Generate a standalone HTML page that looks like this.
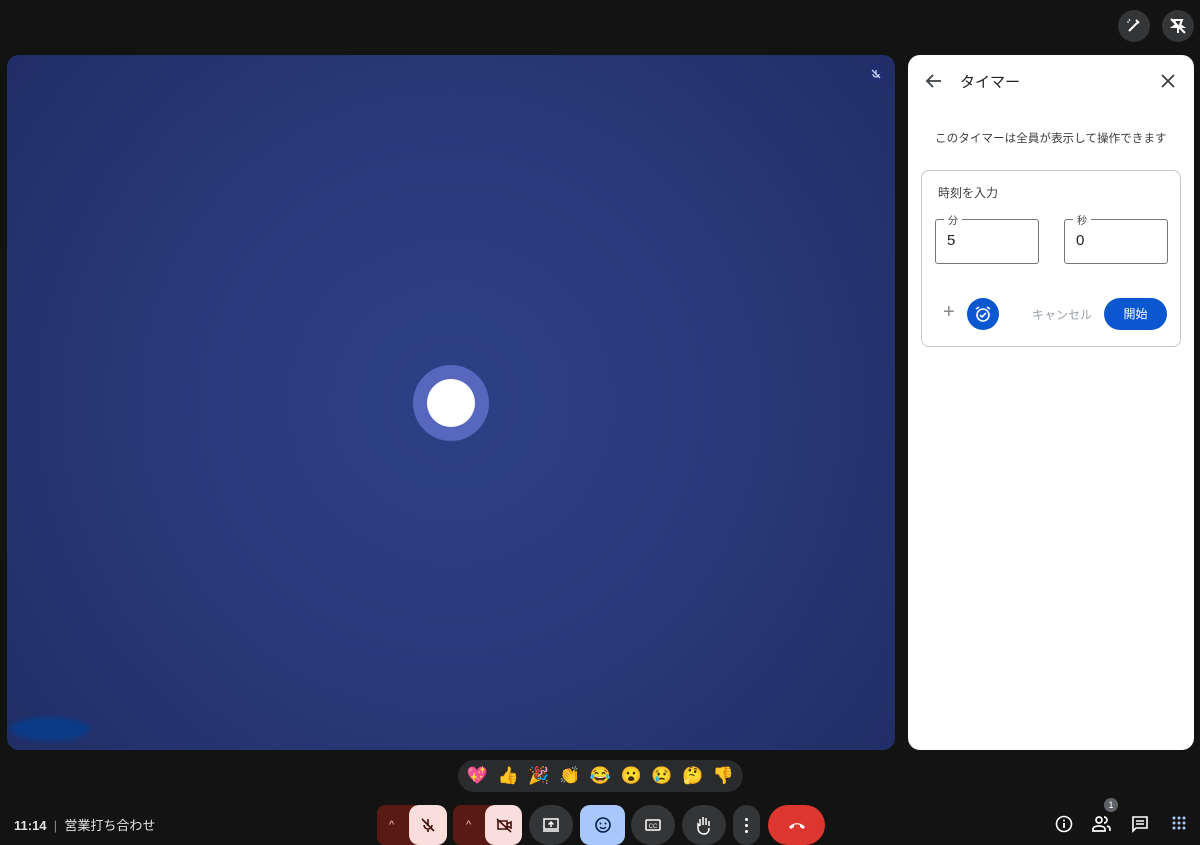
<!DOCTYPE html><html><head><meta charset="utf-8"><style>
body{margin:0;width:1200px;height:845px;background:#131314;font-family:"Liberation Sans","Noto Sans CJK JP",sans-serif;position:relative;overflow:hidden}
.a{position:absolute}
.tile{left:7px;top:55px;width:888px;height:695px;border-radius:12px;background:radial-gradient(circle at 50% 50%,#2e4085 0%,#283a7a 50%,#212e66 100%)}
.panel{left:908px;top:55px;width:286px;height:695px;background:#fff;border-radius:12px}
.btn{top:805px;height:40px;border-radius:20px;background:#333537;display:flex;align-items:center;justify-content:center}
svg{display:block}
</style></head><body>
<div class="a" style="left:1118px;top:10px;width:32px;height:32px;border-radius:50%;background:#333537"></div>
<div class="a" style="left:1162px;top:10px;width:32px;height:32px;border-radius:50%;background:#333537"></div>
<svg class="a" style="left:1124px;top:16px" width="20" height="20" viewBox="0 0 20 20"><path d="M5 15L14 6M12 4l3 3" stroke="#fff" stroke-width="2" fill="none"/><path d="M5 3l1 2M3 6h2" stroke="#fff"/></svg>
<svg class="a" style="left:1168px;top:16px" width="20" height="20" viewBox="0 0 20 20"><path d="M6 4h8l-2 5 3 2H5l3-2zM10 11v6M3 3l14 14" stroke="#fff" stroke-width="2" fill="none"/></svg>
<div class="a tile"></div>
<div class="a" style="left:866px;top:64px;width:20px;height:20px;border-radius:50%;background:#1f2f6e"></div>
<svg class="a" style="left:870px;top:68px" width="12" height="12" viewBox="0 0 12 12"><path d="M6 2v5M3 6a3 3 0 0 0 6 0M2 2l8 8" stroke="#c8d0ff" stroke-width="1.3" fill="none"/></svg>
<div class="a" style="left:413px;top:365px;width:76px;height:76px;border-radius:50%;background:#5667bd"></div>
<div class="a" style="left:427px;top:379px;width:48px;height:48px;border-radius:50%;background:#fff"></div>
<div class="a" style="left:10px;top:717px;width:80px;height:24px;border-radius:50%;background:#0b3a86;filter:blur(2px)"></div>
<div class="a panel"></div>
<svg class="a" style="left:925px;top:72px" width="18" height="18" viewBox="0 0 18 18"><path d="M16 9H3M8 3L2 9l6 6" stroke="#3c4043" stroke-width="1.8" fill="none"/></svg>
<div class="a" style="left:960px;top:71px;font-size:15px;color:#202124">タイマー</div>
<svg class="a" style="left:1160px;top:73px" width="16" height="16" viewBox="0 0 16 16"><path d="M2 2l12 12M14 2L2 14" stroke="#3c4043" stroke-width="1.8"/></svg>
<div class="a" style="left:935px;top:130px;font-size:11.6px;color:#3c4043">このタイマーは全員が表示して操作できます</div>
<div class="a" style="left:921px;top:170px;width:258px;height:175px;border:1px solid #c7c7c7;border-radius:8px"></div>
<div class="a" style="left:938px;top:184px;font-size:12px;color:#3c4043">時刻を入力</div>
<div class="a" style="left:935px;top:219px;width:102px;height:43px;border:1px solid #747775;border-radius:3px"></div>
<div class="a" style="left:944px;top:212px;background:#fff;padding:0 4px;font-size:10px;color:#444">分</div>
<div class="a" style="left:947px;top:232px;font-size:15px;color:#202124">5</div>
<div class="a" style="left:1064px;top:219px;width:102px;height:43px;border:1px solid #747775;border-radius:3px"></div>
<div class="a" style="left:1073px;top:212px;background:#fff;padding:0 4px;font-size:10px;color:#444">秒</div>
<div class="a" style="left:1076px;top:232px;font-size:15px;color:#202124">0</div>
<div class="a" style="left:943px;top:302px;font-size:20px;color:#888;line-height:20px">+</div>
<div class="a" style="left:967px;top:298px;width:32px;height:32px;border-radius:50%;background:#0b57d0"></div>
<svg class="a" style="left:973px;top:304px" width="20" height="20" viewBox="0 0 20 20"><circle cx="10" cy="11" r="6" stroke="#fff" stroke-width="1.6" fill="none"/><path d="M7 11l2 2 4-4M3 5l3-2M17 5l-3-2" stroke="#fff" stroke-width="1.6" fill="none"/></svg>
<div class="a" style="left:1032px;top:306px;font-size:12px;color:#9aa0a6">キャンセル</div>
<div class="a" style="left:1104px;top:298px;width:63px;height:32px;border-radius:16px;background:#0b57d0;color:#fff;font-size:12px;text-align:center;line-height:32px">開始</div>
<div class="a" style="left:458px;top:760px;width:285px;height:32px;border-radius:16px;background:#2a2b2d;display:flex;justify-content:space-around;align-items:center;font-size:17px;padding:0 4px;box-sizing:border-box">
<span>💖</span><span>👍</span><span>🎉</span><span>👏</span><span>😂</span><span>😮</span><span>😢</span><span>🤔</span><span>👎</span></div>
<div class="a" style="left:14px;top:815px;font-size:13px;color:#e3e3e3"><b>11:14</b>&nbsp;&nbsp;<span style="color:#888">|</span>&nbsp;&nbsp;営業打ち合わせ</div>
<div class="a btn" style="left:377px;width:70px;background:#5a1a14;border-radius:8px 20px 20px 8px;justify-content:flex-start"><span style="color:#f1c0bb;font-size:11px;margin-left:12px">^</span></div>
<div class="a btn" style="left:409px;width:38px;background:#f9dedc;border-radius:10px"><svg width="18" height="18" viewBox="0 0 18 18"><path d="M9 3v7M5 9a4 4 0 0 0 8 0M9 13v3M3 3l12 12" stroke="#410e0b" stroke-width="1.6" fill="none"/></svg></div>
<div class="a btn" style="left:453px;width:69px;background:#5a1a14;border-radius:8px 20px 20px 8px;justify-content:flex-start"><span style="color:#f1c0bb;font-size:11px;margin-left:13px">^</span></div>
<div class="a btn" style="left:485px;width:37px;background:#f9dedc;border-radius:10px"><svg width="18" height="18" viewBox="0 0 18 18"><path d="M3 5h9v8H3zM12 8l4-2v6l-4-2M2 3l14 13" stroke="#410e0b" stroke-width="1.6" fill="none"/></svg></div>
<div class="a btn" style="left:529px;width:44px"><svg width="18" height="18" viewBox="0 0 18 18"><path d="M2 3h14v10H2zM1 15h16M9 11V6M6.5 8.5L9 6l2.5 2.5" stroke="#fff" stroke-width="1.5" fill="none"/></svg></div>
<div class="a btn" style="left:580px;width:45px;background:#a8c7fa;border-radius:10px"><svg width="18" height="18" viewBox="0 0 18 18"><circle cx="9" cy="9" r="7" stroke="#041e49" stroke-width="1.6" fill="none"/><circle cx="6.5" cy="7.5" r="1" fill="#041e49"/><circle cx="11.5" cy="7.5" r="1" fill="#041e49"/><path d="M6 11a3.5 3 0 0 0 6 0" stroke="#041e49" stroke-width="1.4" fill="none"/></svg></div>
<div class="a btn" style="left:631px;width:44px"><svg width="18" height="18" viewBox="0 0 18 18"><rect x="2" y="4" width="14" height="10" rx="1" stroke="#fff" stroke-width="1.5" fill="none"/><text x="9" y="12" font-size="6" fill="#fff" text-anchor="middle" font-family="Liberation Sans">CC</text></svg></div>
<div class="a btn" style="left:682px;width:44px"><svg width="18" height="20" viewBox="0 0 18 20"><path d="M5 11V4M8 10V2M11 10V3M14 11V6M5 11l-2-2v4c0 4 3 6 6 6s5-2 5-6" stroke="#fff" stroke-width="1.5" fill="none"/></svg></div>
<div class="a btn" style="left:733px;width:27px;flex-direction:column;gap:3px"><i style="width:3px;height:3px;background:#fff;border-radius:50%"></i><i style="width:3px;height:3px;background:#fff;border-radius:50%"></i><i style="width:3px;height:3px;background:#fff;border-radius:50%"></i></div>
<div class="a btn" style="left:768px;width:57px;background:#dc362e"><svg width="20" height="10" viewBox="0 0 20 10"><path d="M2 7c4-5 12-5 16 0l-2 2-3-2v-2c-2-1-4-1-6 0v2l-3 2z" fill="#fff"/></svg></div>
<svg class="a" style="left:1055px;top:815px" width="18" height="18" viewBox="0 0 18 18"><circle cx="9" cy="9" r="7.5" stroke="#fff" stroke-width="1.6" fill="none"/><path d="M9 8v5" stroke="#fff" stroke-width="1.8"/><circle cx="9" cy="5.5" r="1" fill="#fff"/></svg>
<div class="a" style="left:1104px;top:798px;width:14px;height:14px;border-radius:50%;background:#5f6368;color:#fff;font-size:9px;text-align:center;line-height:14px">1</div>
<svg class="a" style="left:1092px;top:815px" width="20" height="18" viewBox="0 0 20 18"><circle cx="7" cy="5" r="3" stroke="#fff" stroke-width="1.7" fill="none"/><path d="M1 16v-2c0-2 3-3 6-3s6 1 6 3v2zM12 2a3 3 0 0 1 0 6M15 11c2 .5 3 1.5 3 3v2" stroke="#fff" stroke-width="1.7" fill="none"/></svg>
<svg class="a" style="left:1131px;top:815px" width="18" height="18" viewBox="0 0 18 18"><path d="M2 2h14v11H5l-3 3z" stroke="#fff" stroke-width="1.6" fill="none"/><path d="M5 6h8M5 9h8" stroke="#fff" stroke-width="1.4"/></svg>
<svg class="a" style="left:1172px;top:816px" width="14" height="14" viewBox="0 0 14 14" fill="#a8c7fa"><circle cx="2" cy="2" r="1.5"/><circle cx="7" cy="2" r="1.5"/><circle cx="12" cy="2" r="1.5"/><circle cx="2" cy="7" r="1.5"/><circle cx="7" cy="7" r="1.5"/><circle cx="12" cy="7" r="1.5"/><circle cx="2" cy="12" r="1.5"/><circle cx="7" cy="12" r="1.5"/><circle cx="12" cy="12" r="1.5"/></svg>
</body></html>
